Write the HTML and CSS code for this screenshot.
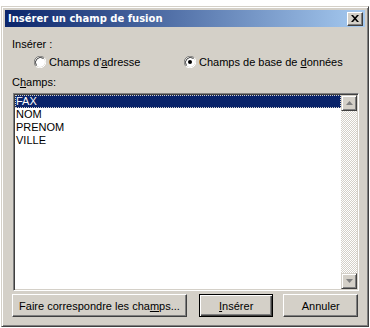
FILE: index.html
```html
<!DOCTYPE html>
<html lang="fr">
<head>
<meta charset="utf-8">
<title>Insérer un champ de fusion</title>
<link rel="stylesheet" href="styles.css">
</head>
<body>
<div class="window">
  <div class="titlebar">
    <span class="title">Insérer un champ de fusion</span>
    <button class="close" aria-label="Fermer">
      <svg width="8" height="7" viewBox="0 0 8 7"><path d="M0 0h2l2 2.2L6 0h2L5 3.5 8 7H6L4 4.8 2 7H0l3-3.5z" fill="#000"/></svg>
    </button>
  </div>
  <div class="content">
    <div class="label">Insérer :</div>
    <div class="radios">
      <label class="radio r1">
        <svg class="rb" width="12" height="12" viewBox="0 0 12 12">
          <path d="M10.24 1.76A6 6 0 0 0 1.76 10.24" fill="none" stroke="#808080" stroke-width="1"/>
          <circle cx="6" cy="6" r="5" fill="#fff"/>
          <path d="M9.5 2.5A5 5 0 0 0 2.5 9.5" fill="none" stroke="#404040" stroke-width="1"/>
          <path d="M1.76 10.24A6 6 0 0 0 10.24 1.76" fill="none" stroke="#fff" stroke-width="1"/>
        </svg>
        <span>Champs d'<u>a</u>dresse</span>
      </label>
      <label class="radio r2">
        <svg class="rb" width="12" height="12" viewBox="0 0 12 12">
          <path d="M10.24 1.76A6 6 0 0 0 1.76 10.24" fill="none" stroke="#808080" stroke-width="1"/>
          <circle cx="6" cy="6" r="5" fill="#fff"/>
          <path d="M9.5 2.5A5 5 0 0 0 2.5 9.5" fill="none" stroke="#404040" stroke-width="1"/>
          <path d="M1.76 10.24A6 6 0 0 0 10.24 1.76" fill="none" stroke="#fff" stroke-width="1"/>
          <circle cx="6" cy="6" r="2" fill="#000"/>
        </svg>
        <span>Champs de base de <u>d</u>onnées</span>
      </label>
    </div>
    <div class="label label2">C<u>h</u>amps:</div>
    <div class="listbox">
      <ul class="items">
        <li class="sel">FAX</li>
        <li>NOM</li>
        <li>PRENOM</li>
        <li>VILLE</li>
      </ul>
      <div class="scrollbar">
        <div class="sbtn">
          <svg width="7" height="5" viewBox="0 0 7 5"><path d="M3.5 0L7 4H0z" fill="#808080"/></svg>
        </div>
        <div class="track"></div>
        <div class="sbtn">
          <svg width="7" height="5" viewBox="0 0 7 5"><path d="M0 0h7L3.5 4z" fill="#808080"/></svg>
        </div>
      </div>
    </div>
    <div class="buttons">
      <button class="btn wide">Faire correspondre les cha<u>m</u>ps...</button>
      <button class="btn def"><u>I</u>nsérer</button>
      <button class="btn">Annuler</button>
    </div>
  </div>
</div>
</body>
</html>
```
FILE: styles.css
```css
html, body {
  margin: 0;
  padding: 0;
  background: #fff;
}
body {
  font-family: "Liberation Sans", Arial, sans-serif;
  font-size: 11px;
  color: #000;
}
.window {
  box-sizing: border-box;
  margin: 6px 0 0 1px;
  width: 368px;
  height: 321px;
  background: #d4d0c8;
  border-top: 1px solid #d4d0c8;
  border-left: 1px solid #d4d0c8;
  border-right: 1px solid #404040;
  border-bottom: 1px solid #404040;
  box-shadow: inset 1px 1px #fff, inset -1px -1px #808080;
  padding: 3px;
  display: flex;
  flex-direction: column;
}
.titlebar {
  height: 17px;
  flex: none;
  background: linear-gradient(to right, #0a246a, #a6caf0);
  display: flex;
  align-items: center;
  justify-content: space-between;
  padding: 0 2px 0 3px;
}
.title {
  color: #fff;
  font-family: "DejaVu Sans", Verdana, sans-serif;
  font-weight: bold;
  font-size: 10px;
}
.close {
  box-sizing: border-box;
  width: 16px;
  height: 14px;
  padding: 0;
  margin: 0;
  background: #d4d0c8;
  border-top: 1px solid #fff;
  border-left: 1px solid #fff;
  border-right: 1px solid #404040;
  border-bottom: 1px solid #404040;
  box-shadow: inset -1px -1px #808080;
  display: flex;
  align-items: center;
  justify-content: center;
}
.content {
  flex: 1;
  display: flex;
  flex-direction: column;
  padding: 11px 7px 0 7px;
}
.label {
  height: 13px;
  line-height: 13px;
}
.radios {
  display: flex;
  height: 16px;
  margin-top: 3px;
  align-items: center;
}
.radio {
  display: flex;
  align-items: center;
  gap: 3px;
}
.r1 { margin-left: 22px; width: 150px; }
.rb { flex: none; }
.label2 { margin-top: 6px; }
.listbox {
  box-sizing: border-box;
  margin-top: 4px;
  height: 198px;
  width: 346px;
  margin-left: 1px;
  background: #fff;
  border-top: 1px solid #808080;
  border-left: 1px solid #808080;
  border-right: 1px solid #fff;
  border-bottom: 1px solid #fff;
  box-shadow: inset 1px 1px #404040, inset -1px -1px #d4d0c8;
  padding: 1px;
  display: flex;
}
.items {
  list-style: none;
  margin: 0;
  padding: 0;
  flex: 1;
}
.items li {
  height: 13px;
  line-height: 13px;
  padding-left: 1px;
}
.items li.sel {
  background: #0a246a;
  color: #fff;
  outline: 1px dotted #d4d0c8;
  outline-offset: -1px;
}
.scrollbar {
  width: 16px;
  display: flex;
  flex-direction: column;
}
.sbtn {
  box-sizing: border-box;
  height: 16px;
  background: #d4d0c8;
  border-top: 1px solid #d4d0c8;
  border-left: 1px solid #d4d0c8;
  border-right: 1px solid #404040;
  border-bottom: 1px solid #404040;
  box-shadow: inset 1px 1px #fff, inset -1px -1px #808080;
  display: flex;
  align-items: center;
  justify-content: center;
}
.track {
  flex: 1;
  background-color: #fff;
  background-image: conic-gradient(#d4d0c8 25%, #fff 0 50%, #d4d0c8 0 75%, #fff 0);
  background-size: 2px 2px;
}
.buttons {
  display: flex;
  margin-top: 3px;
  height: 23px;
}
.btn {
  box-sizing: border-box;
  height: 23px;
  width: 75px;
  margin: 0;
  padding: 0;
  font-family: "Liberation Sans", Arial, sans-serif;
  font-size: 11px;
  color: #000;
  background: #d4d0c8;
  border-top: 1px solid #fff;
  border-left: 1px solid #fff;
  border-right: 1px solid #404040;
  border-bottom: 1px solid #404040;
  box-shadow: inset -1px -1px #808080;
}
.btn.wide {
  width: 176px;
}
.btn.def {
  margin-left: 12px;
  border: 1px solid #000;
  box-shadow: inset 1px 1px #fff, inset -1px -1px #404040, inset -2px -2px #808080;
}
.btn.def + .btn {
  margin-left: 10px;
}
```
